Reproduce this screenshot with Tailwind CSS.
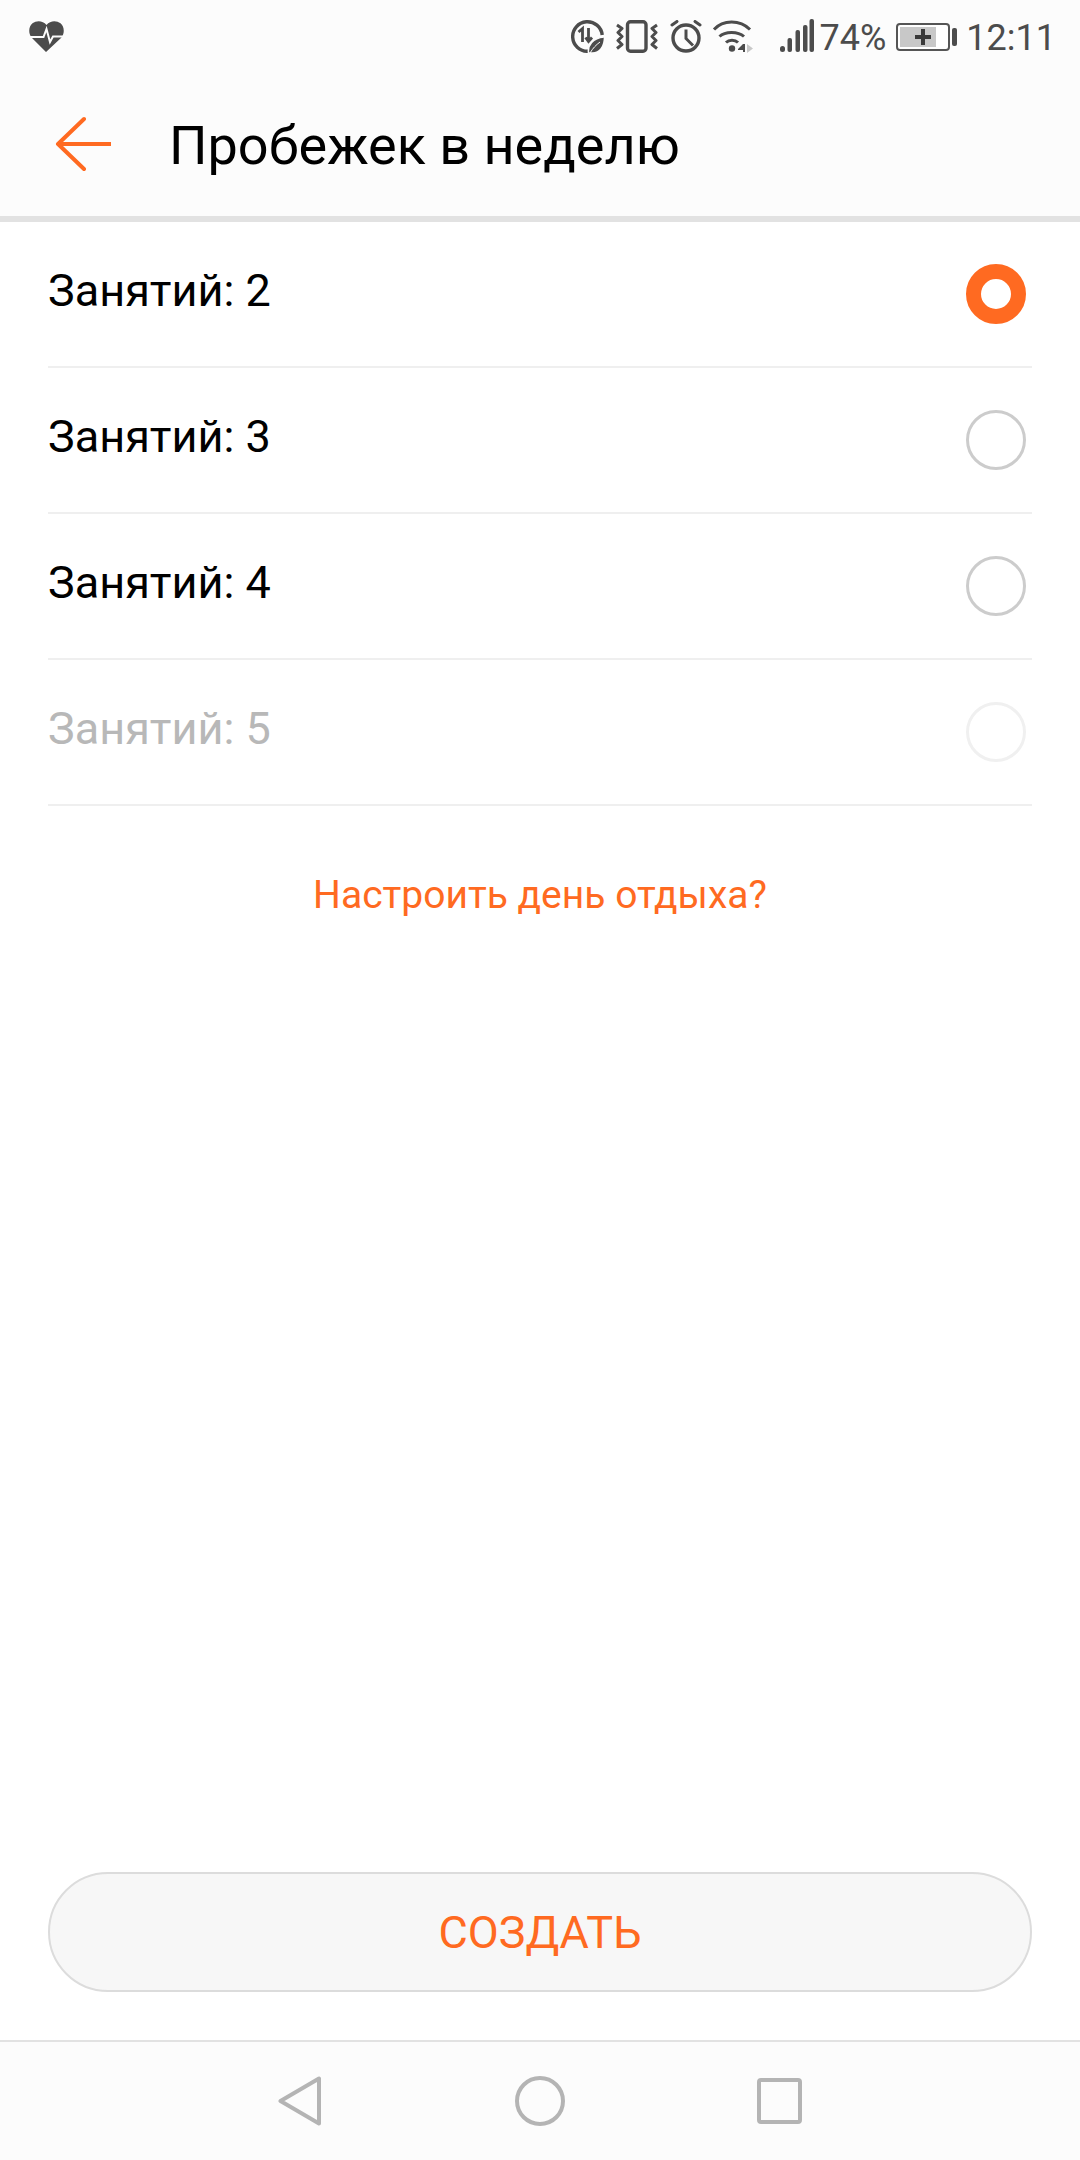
<!DOCTYPE html>
<html lang="ru">
<head>
  <meta charset="UTF-8">
  <meta name="viewport" content="width=device-width, initial-scale=1.0">
  <title>Пробежек в неделю</title>
  <script src="https://cdn.jsdelivr.net/npm/@tailwindcss/browser@4"></script>
</head>
<body class="bg-white">
  <div class="flex flex-col w-[1080px] h-[2160px] bg-white font-['Roboto',sans-serif]">

    <!-- status bar + title -->
    <header class="h-[222px] shrink-0 bg-[#fcfcfc] border-b-[6px] border-[#e2e2e2]">
      <div class="h-[72px] flex items-start justify-between text-[#4c4c4c]">
        <svg class="ml-[29px] mt-[21px] w-[35px] h-[31px]" viewBox="0 0 35 31">
          <path fill="#4c4c4c" d="M17 31 3 17C-1 12.500-.5 5.500 3.500 2.300 8-1 14-.2 17.500 4 21-.2 27-1 31.500 2.300 35.500 5.500 36 12.500 32 17Z"/>
          <path fill="none" stroke="#fcfcfc" stroke-width="2" d="M0 16h14.500l3-8 3.500 13 3-5.500h11"/>
        </svg>
        <div class="flex items-start">
          <!-- data saver -->
          <svg class="mt-[20px] w-[33px] h-[33px]" viewBox="0 0 33 33">
            <path fill="none" stroke="#4c4c4c" stroke-width="3.400" d="M17 31.300A14.800 14.800 0 1 1 31.200 15"/>
            <path fill="none" stroke="#4c4c4c" stroke-width="2.800" d="M7.500 12l4-3.500V22M17.500 8v13.500m-3-4 3 4 3.500-4"/>
            <path fill="#4c4c4c" stroke="#fcfcfc" stroke-width="1.500" d="M17.500 33c-1-8 4-15 16-16 0 10-5 16-12 16Z"/>
            <path fill="none" stroke="#fcfcfc" stroke-width="1" d="M19 33c3-5 6-8 10-11"/>
          </svg>
          <!-- vibrate -->
          <svg class="ml-[12px] mt-[20px] w-[42px] h-[33px]" viewBox="0 0 42 33">
            <rect x="11.500" y="1.700" width="18.500" height="29.600" rx="3" fill="none" stroke="#4c4c4c" stroke-width="3.400"/>
            <path fill="none" stroke="#4c4c4c" stroke-width="3" stroke-linejoin="round" d="M1 5l5 3.500-4 4 4 4-4 4 4 4-5 4M41 5l-5 3.500 4 4-4 4 4 4-4 4 5 4"/>
          </svg>
          <!-- alarm -->
          <svg class="ml-[12px] mt-[20px] w-[33px] h-[33px]" viewBox="0 0 33 33">
            <circle cx="16" cy="18" r="13" fill="none" stroke="#4c4c4c" stroke-width="3.400"/>
            <path fill="none" stroke="#4c4c4c" stroke-width="3" d="M16 9.500V18.500l7 7"/>
            <path fill="none" stroke="#4c4c4c" stroke-width="3" stroke-linecap="round" d="M2 5l5-3.500M30 5l-5-3.500"/>
          </svg>
          <!-- wifi -->
          <svg class="ml-[9px] mt-[20px] w-[41px] h-[33px]" viewBox="0 0 41 33">
            <path fill="none" stroke="#4c4c4c" stroke-width="3" d="M2 9.500C11-.5 28-.5 38 9.500M7.500 16.500C13 11 26 11 32 16.500M14 22.500c3-3 9-3 12 0"/>
            <circle cx="20" cy="28.500" r="3.200" fill="#4c4c4c"/>
            <path fill="#4c4c4c" d="M26 29l5-5h2v8h-2v-2h-5Z"/>
            <path fill="#c8c8c8" d="M35 24l6 4.500-6 4.500Z"/>
          </svg>
          <!-- signal -->
          <svg class="ml-[27px] mt-[19px] w-[34px] h-[34px]" viewBox="0 0 34 34">
            <g fill="#4c4c4c">
              <rect x="0" y="27" width="5" height="6" rx="2.500"/>
              <rect x="7.500" y="19" width="4.500" height="14" rx="2"/>
              <rect x="15.500" y="11" width="4.500" height="22" rx="2"/>
              <rect x="23" y="6" width="4.500" height="27" rx="2"/>
              <rect x="29.500" y="0" width="4.500" height="33" rx="2"/>
            </g>
          </svg>
          <span class="ml-[6px] mt-[18px] text-[36px] leading-[40px]">74%</span>
          <!-- battery -->
          <div class="ml-[10px] mt-[23px] flex items-center">
            <div class="w-[54px] h-[28px] border-2 border-[#555555] rounded-[4px] p-[2px] bg-white">
              <div class="w-[36px] h-full bg-[#c8c8c8] flex items-center justify-end pr-[5px]">
                <svg class="w-[16px] h-[16px]" viewBox="0 0 16 16"><path fill="#3a3a3a" d="M6 0h4v6h6v4h-6v6H6v-6H0V6h6Z"/></svg>
              </div>
            </div>
            <div class="ml-[2px] w-[5px] h-[18px] rounded-[2px] bg-[#4c4c4c]"></div>
          </div>
          <span class="ml-[9px] mr-[24px] mt-[18px] text-[36px] leading-[40px]">12:11</span>
        </div>
      </div>
      <div class="h-[144px] flex items-center">
        <svg class="ml-[54px] w-[57px] h-[56px]" viewBox="0 0 57 56">
          <path fill="none" stroke="#ff6a21" stroke-width="4" stroke-linecap="round" stroke-linejoin="round" d="M30 3 4 28l26 25M4 28h53"/>
        </svg>
        <h1 class="ml-[58px] mt-[4px] text-[54px] leading-[60px] font-normal text-black">Пробежек в неделю</h1>
      </div>
    </header>

    <!-- options -->
    <main class="flex-1 px-[48px]">
      <ul>
        <li class="h-[146px] flex items-center justify-between border-b-2 border-[#efefef]">
          <span class="mb-[7px] text-[45px] text-black">Занятий: 2</span>
          <span class="mr-[6px] w-[60px] h-[60px] rounded-full border-[15px] border-[#ff6a21] bg-white"></span>
        </li>
        <li class="h-[146px] flex items-center justify-between border-b-2 border-[#efefef]">
          <span class="mb-[7px] text-[45px] text-black">Занятий: 3</span>
          <span class="mr-[6px] w-[60px] h-[60px] rounded-full border-[3px] border-[#cccccc]"></span>
        </li>
        <li class="h-[146px] flex items-center justify-between border-b-2 border-[#efefef]">
          <span class="mb-[7px] text-[45px] text-black">Занятий: 4</span>
          <span class="mr-[6px] w-[60px] h-[60px] rounded-full border-[3px] border-[#cccccc]"></span>
        </li>
        <li class="h-[146px] flex items-center justify-between border-b-2 border-[#efefef]">
          <span class="mb-[7px] text-[45px] text-[#b8b8b8]">Занятий: 5</span>
          <span class="mr-[6px] w-[60px] h-[60px] rounded-full border-[3px] border-[#f0f0f0]"></span>
        </li>
      </ul>
      <p class="mt-[65px] text-center text-[39px] leading-[48px] text-[#ff6a21]">Настроить день отдыха?</p>
    </main>

    <!-- action -->
    <div class="shrink-0 px-[48px] pb-[48px]">
      <button class="w-full h-[120px] pt-[2px] rounded-full border-2 border-[#dcdcdc] bg-[#f7f7f7] text-[45px] text-[#ff6a21]">СОЗДАТЬ</button>
    </div>

    <!-- system navigation -->
    <nav class="shrink-0 h-[120px] bg-[#fcfcfc] border-t-2 border-[#e2e2e2] flex items-center justify-center">
      <svg class="w-[43px] h-[50px]" viewBox="0 0 43 50">
        <path fill="none" stroke="#b4b4b4" stroke-width="4" stroke-linejoin="round" d="M41 2.500v45L2.500 25Z"/>
      </svg>
      <svg class="ml-[194px] w-[50px] h-[50px]" viewBox="0 0 50 50">
        <circle cx="25" cy="25" r="23" fill="none" stroke="#b4b4b4" stroke-width="4"/>
      </svg>
      <svg class="ml-[192px] w-[45px] h-[46px]" viewBox="0 0 45 46">
        <rect x="2" y="2" width="41" height="42" rx="2" fill="none" stroke="#b4b4b4" stroke-width="4"/>
      </svg>
    </nav>
  </div>
</body>
</html>
